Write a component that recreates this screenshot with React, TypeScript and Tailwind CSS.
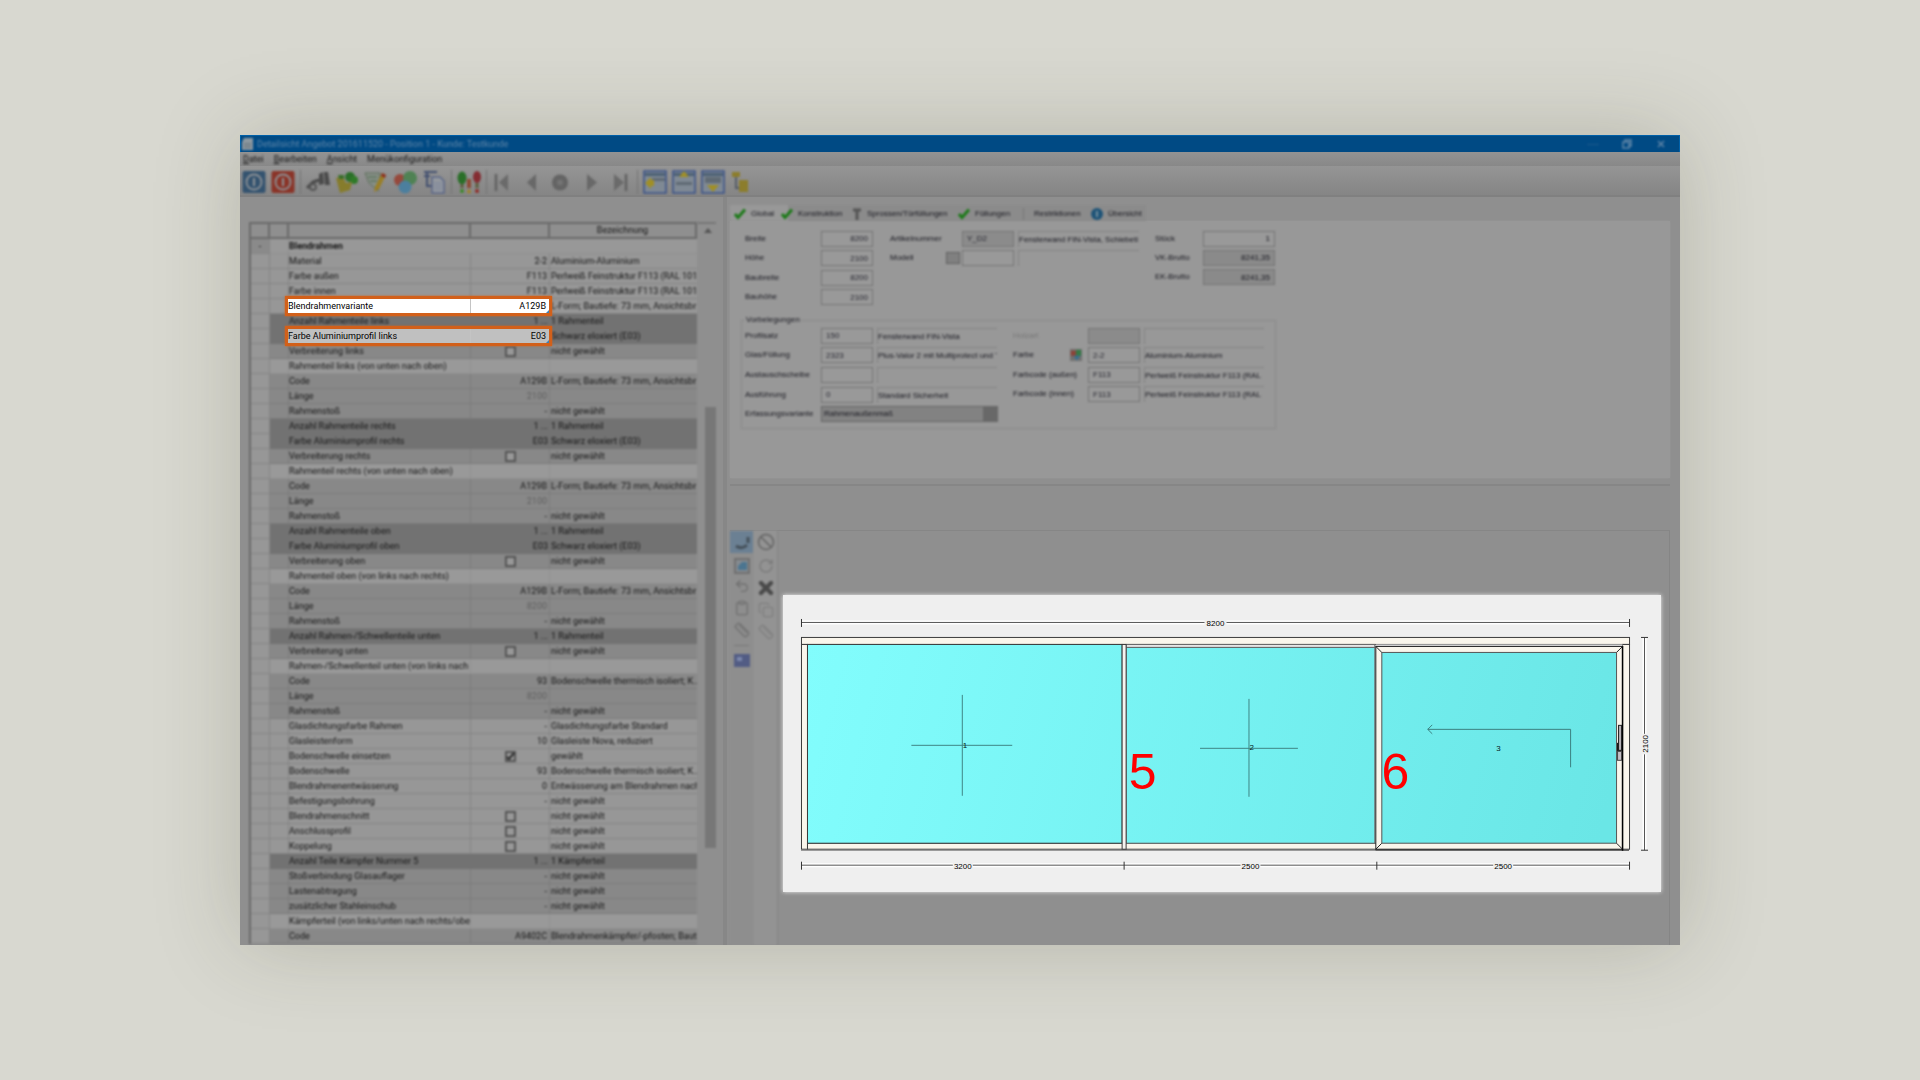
import React from "react";
import { Ban, RotateCw, X, Copy, Clipboard, Undo2, Ruler } from "lucide-react";

type Kind = "title" | "light" | "mid" | "dark" | "group";
type Row = { kind: Kind; name: string; value?: string; desc?: string; box?: boolean; checked?: boolean; faint?: boolean };

const NG = "nicht gewählt";
const LF = "L-Form; Bautiefe: 73 mm, Ansichtsbr";
const BS = "Bodenschwelle thermisch isoliert; K...";

const r = (kind: Kind, name: string, value?: string, desc?: string, extra: Partial<Row> = {}): Row => ({ kind, name, value, desc, ...extra });

// Rows with an empty name get their text from the Highlight laid over them.
const rows: Row[] = [
  r("title", "Blendrahmen"),
  r("light", "Material", "2-2", "Aluminium-Aluminium"),
  r("light", "Farbe außen", "F113", "Perlweiß Feinstruktur F113 (RAL 1013)"),
  r("light", "Farbe innen", "F113", "Perlweiß Feinstruktur F113 (RAL 1013)"),
  r("light", "", "", LF),
  r("dark", "Anzahl Rahmenteile links", "1 ...", "1 Rahmenteil"),
  r("dark", "", "", "Schwarz eloxiert (E03)"),
  r("mid", "Verbreiterung links", "", NG, { box: true }),
  r("group", "Rahmenteil links (von unten nach oben)"),
  r("mid", "Code", "A129B", LF),
  r("mid", "Länge", "2100", "", { faint: true }),
  r("mid", "Rahmenstoß", "-", NG),
  r("dark", "Anzahl Rahmenteile rechts", "1 ...", "1 Rahmenteil"),
  r("dark", "Farbe Aluminiumprofil rechts", "E03", "Schwarz eloxiert (E03)"),
  r("mid", "Verbreiterung rechts", "", NG, { box: true }),
  r("group", "Rahmenteil rechts (von unten nach oben)"),
  r("mid", "Code", "A129B", LF),
  r("mid", "Länge", "2100", "", { faint: true }),
  r("mid", "Rahmenstoß", "-", NG),
  r("dark", "Anzahl Rahmenteile oben", "1 ...", "1 Rahmenteil"),
  r("dark", "Farbe Aluminiumprofil oben", "E03", "Schwarz eloxiert (E03)"),
  r("mid", "Verbreiterung oben", "", NG, { box: true }),
  r("group", "Rahmenteil oben (von links nach rechts)"),
  r("mid", "Code", "A129B", LF),
  r("mid", "Länge", "8200", "", { faint: true }),
  r("mid", "Rahmenstoß", "-", NG),
  r("dark", "Anzahl Rahmen-/Schwellenteile unten", "1 ...", "1 Rahmenteil"),
  r("mid", "Verbreiterung unten", "", NG, { box: true }),
  r("group", "Rahmen-/Schwellenteil unten (von links nach r"),
  r("mid", "Code", "93", BS),
  r("mid", "Länge", "8200", "", { faint: true }),
  r("mid", "Rahmenstoß", "-", NG),
  r("light", "Glasdichtungsfarbe Rahmen", "-", "Glasdichtungsfarbe Standard"),
  r("light", "Glasleistenform", "10", "Glasleiste Nova, reduziert"),
  r("light", "Bodenschwelle einsetzen", "", "gewählt", { box: true, checked: true }),
  r("light", "Bodenschwelle", "93", BS),
  r("light", "Blendrahmenentwässerung", "0", "Entwässerung am Blendrahmen nach"),
  r("light", "Befestigungsbohrung", "-", NG),
  r("light", "Blendrahmenschnitt", "", NG, { box: true }),
  r("light", "Anschlussprofil", "", NG, { box: true }),
  r("light", "Koppelung", "", NG, { box: true }),
  r("dark", "Anzahl Teile Kämpfer Nummer 5", "1 ...", "1 Kämpferteil"),
  r("mid", "Stoßverbindung Glasauflager", "-", NG),
  r("mid", "Lastenabtragung", "-", NG),
  r("mid", "zusätzlicher Stahleinschub", "-", NG),
  r("group", "Kämpferteil (von links/unten nach rechts/oben)"),
  r("mid", "Code", "A9402C", "Blendrahmenkämpfer/-pfosten; Bauti"),
];

const bgOf: Record<Kind, string> = {
  title: "bg-[#989898] border-[#909090]",
  group: "bg-[#999999] border-[#909090]",
  light: "bg-[#979797] border-[#848484]",
  mid: "bg-[#888888] border-[#7b7b7b]",
  dark: "bg-[#727272] border-[#717171]",
};

function PropertyTable() {
  const head = "h-[15px] border-r-2 border-b-2 border-[#6a6a6a] p-0 font-normal";
  return (
    <table className="w-full table-fixed border-separate border-spacing-0 border-t-2 border-l-2 border-[#6a6a6a] text-[9px] leading-[13px] text-[#141414]">
      <colgroup>
        <col className="w-[19px]" />
        <col className="w-[19px]" />
        <col />
        <col className="w-[79px]" />
        <col className="w-[147px]" />
      </colgroup>
      <thead>
        <tr>
          <th className={head} aria-label="Gruppe" />
          <th className={head} aria-label="Status" />
          <th className={head} aria-label="Merkmal" />
          <th className={head} aria-label="Wert" />
          <th className={head}>Bezeichnung</th>
        </tr>
      </thead>
      <tbody>
        {rows.map((row, i) => {
          const cell = `h-[15px] border-b p-0 overflow-hidden whitespace-nowrap ${bgOf[row.kind]}`;
          return (
            <tr key={i}>
              <td className={`h-[15px] border-r border-b border-[#858585] p-0 text-center ${i === 0 ? "bg-[#8a8a8a]" : "bg-[#979797]"}`}>{i === 0 ? "-" : ""}</td>
              <td className={`${cell} ${row.kind === "dark" ? "" : "border-r"}`} />
              <td className={`${cell} ${row.kind === "title" ? "font-bold" : row.kind === "dark" ? "" : "border-r"}`}>{row.name}</td>
              <td className={`${cell} pr-0.5 text-right ${row.kind === "title" || row.kind === "dark" ? "" : "border-r"} ${row.faint ? "text-[#606060]" : ""}`}>
                {row.box ? (
                  <div className="relative flex justify-center pl-0.5">
                    <input
                      type="checkbox"
                      aria-label={row.name}
                      defaultChecked={row.checked}
                      className="h-[11px] w-[11px] appearance-none border-2 border-[#555] bg-[#989898]"
                    />
                    {row.checked && (
                      <svg viewBox="0 0 11 11" className="pointer-events-none absolute h-[11px] w-[11px]"><path d="M2 6l2 2 5-6" fill="none" stroke="#2c2c2c" strokeWidth="2" /></svg>
                    )}
                  </div>
                ) : (
                  row.value
                )}
              </td>
              <td className={`${cell} pl-px`}>{row.desc}</td>
            </tr>
          );
        })}
      </tbody>
    </table>
  );
}

function Highlight({ name, value, tone, place }: { name: string; value: string; tone: string; place: string }) {
  return (
    <div className={`absolute right-[171px] left-9 flex h-5 border-3 border-[#d2601a] text-[9px] leading-[14px] text-black shadow-[0_0_2px_#d2601a] ${tone} ${place}`}>
      <span className="flex-1 border-r border-[#c4c4c4]">{name}</span>
      <span className="relative w-[78px] pr-[3px] text-right">
        {value}
        <svg className="absolute right-0 bottom-0 h-[3px] w-[3px]" viewBox="0 0 3 3"><path d="M3 0v3H0z" fill="#3d7fb5" /></svg>
      </span>
    </div>
  );
}

function ToolButton({ label, children }: { label: string; children: React.ReactNode }) {
  return (
    <button type="button" aria-label={label} className="flex h-6 w-6 shrink-0 items-center justify-center">
      {children}
    </button>
  );
}

const Sep = () => <div className="h-6 w-px shrink-0 bg-[#747474]" />;

function Icon({ children }: { children: React.ReactNode }) {
  return <svg viewBox="0 0 24 24" className="h-6 w-6">{children}</svg>;
}

function Power({ fill }: { fill: string }) {
  return (
    <Icon>
      <rect x="0.5" y="1" width="23" height="22" rx="2" fill={fill} />
      <circle cx="12" cy="12" r="7.5" fill="none" stroke="#8e9296" strokeWidth="1.8" />
      <path d="M12 8v8" stroke="#8e9296" strokeWidth="2" />
    </Icon>
  );
}

function PanelIcon({ arrow, side }: { arrow: string; side: string }) {
  return (
    <Icon>
      <rect x="1" y="1" width="22" height="22" fill="#7f8994" stroke="#3a5288" strokeWidth="1.5" />
      <path d="M2 3h20v3H2z" fill="#4c6074" />
      <path d={side} fill="#5f6a74" />
      <path d={arrow} fill="#a08f26" />
    </Icon>
  );
}

function Toolbar() {
  return (
    <div className="h-[31px] overflow-hidden border-b-2 border-[#808080] bg-linear-to-b from-[#959595] to-[#858585]">
      <div className="flex h-full items-center gap-[5px] pt-0.5 pl-0.5 blur-[1px]" role="toolbar" aria-label="Werkzeuge">
        <ToolButton label="Speichern"><Power fill="#34536f" /></ToolButton>
        <ToolButton label="Beenden"><Power fill="#8a3428" /></ToolButton>
        <Sep />
        <ToolButton label="Suchen">
          <Icon>
            <path d="M13 4l4-2 1 12-5 1zM18 2h4l2 13h-5z" fill="#4a4a4a" />
            <path d="M1 18l6-6 6-2M15 6v8" fill="none" stroke="#4a4a4a" strokeWidth="3" />
            <circle cx="7" cy="17" r="3" fill="none" stroke="#555" strokeWidth="2" />
          </Icon>
        </ToolButton>
        <ToolButton label="Farben">
          <Icon>
            <circle cx="15" cy="7" r="5" fill="#2a6f28" /><circle cx="19" cy="10" r="4" fill="#2f7a28" />
            <path d="M1 8l7-1 3 6 6-1-2 8-10 3z" fill="#867c2c" /><path d="M3 5h6v4H4z" fill="#3b6f2a" />
          </Icon>
        </ToolButton>
        <ToolButton label="Bearbeiten">
          <Icon>
            <path d="M1 3h15l-2 18-9-8z" fill="#868e86" stroke="#5c6e5a" /><path d="M4 7h9M6 11h7" stroke="#4b6a4b" />
            <path d="M18 3l4 2-7 14-5 3 1-5z" fill="#9a7f26" /><path d="M18 3l4 2-1 3-4-2z" fill="#8c2c20" />
          </Icon>
        </ToolButton>
        <ToolButton label="Farbpalette">
          <Icon>
            <circle cx="7" cy="10" r="6" fill="#96493c" /><circle cx="17" cy="8" r="7" fill="#4f8254" /><circle cx="12" cy="17" r="6.5" fill="#4c7f9e" />
          </Icon>
        </ToolButton>
        <ToolButton label="Kopieren">
          <Icon>
            <path d="M2 2h13M2 6h6M5 2v14h5" fill="none" stroke="#435070" strokeWidth="2" />
            <path d="M10 7h8l4 4v12H10z" fill="#94989e" stroke="#5a6688" strokeWidth="1.5" /><path d="M12 13h8M12 16h8M12 19h8" stroke="#77819a" />
          </Icon>
        </ToolButton>
        <Sep />
        <ToolButton label="Prüfen">
          <Icon>
            <ellipse cx="5" cy="8" rx="4.5" ry="6.5" fill="#2a6f28" /><ellipse cx="20" cy="7" rx="4" ry="6" fill="#842c32" />
            <path d="M12 9v9" stroke="#8e4a34" strokeWidth="4" /><path d="M5 14v4M20 13v5" stroke="#5c5c3c" strokeWidth="3" />
            <circle cx="5" cy="21" r="2" fill="#3a8a28" /><circle cx="12" cy="21.5" r="2" fill="#a0842c" /><circle cx="20" cy="21" r="2" fill="#902c28" />
          </Icon>
        </ToolButton>
        <Sep />
        <ToolButton label="Erste Position"><Icon><path d="M4 4v17" stroke="#606060" strokeWidth="2.5" /><path d="M16 4v17L7 12.5z" fill="#6a6a6a" /></Icon></ToolButton>
        <ToolButton label="Vorherige Position"><Icon><path d="M15 4v17L6 12.5z" fill="#686868" /></Icon></ToolButton>
        <ToolButton label="Aktuelle Position"><Icon><circle cx="10" cy="12.5" r="8" fill="#646464" /><circle cx="10" cy="12.5" r="3" fill="#747474" /></Icon></ToolButton>
        <ToolButton label="Nächste Position"><Icon><path d="M8 4v17l10-8.5z" fill="#686868" /></Icon></ToolButton>
        <ToolButton label="Letzte Position"><Icon><path d="M18 4v17" stroke="#606060" strokeWidth="2.5" /><path d="M6 4v17l10-8.5z" fill="#6a6a6a" /></Icon></ToolButton>
        <Sep />
        <ToolButton label="Bereich links"><PanelIcon side="M9 8h13v3H9z" arrow="M2 13l6-6v3h3v6H8v3z" /></ToolButton>
        <ToolButton label="Bereich oben"><PanelIcon side="M4 12h16v3H4z" arrow="M12 1l5 6H7z" /></ToolButton>
        <ToolButton label="Bereich unten"><PanelIcon side="M4 7h16v6H4z" arrow="M12 22l6-7H6z" /></ToolButton>
        <ToolButton label="Struktur">
          <Icon><path d="M6 6v12h6" stroke="#555c66" strokeWidth="2" fill="none" /><path d="M2 2h8v5H2zM9 10h9v12H9z" fill="#8c7d2c" /></Icon>
        </ToolButton>
      </div>
    </div>
  );
}

const Check = () => (
  <svg viewBox="0 0 12 12" className="h-3 w-3 shrink-0"><path d="M1 6l3 3.500L11 1.500" fill="none" stroke="#1e7a1a" strokeWidth="3" /></svg>
);

const boxCls = "h-4 w-[52px] border border-[#757575] px-1 text-[#262630]";

function Field({ id, label, value, right, gray, desc, pre, faint, cols }: {
  id: string; label: string; value?: string; right?: boolean; gray?: boolean; desc?: string; pre?: React.ReactNode; faint?: boolean; cols: string;
}) {
  return (
    <div className={`grid items-center ${cols}`}>
      <label htmlFor={id} className={`whitespace-nowrap ${faint ? "text-[#777]" : ""}`}>{label}</label>
      <div className="flex items-center justify-end gap-0.5">
        {pre}
        <input id={id} defaultValue={value} className={`${boxCls} ${right ? "text-right" : ""} ${gray ? "bg-[#8b8b8b]" : "bg-[#999]"}`} />
      </div>
      {desc !== undefined && (
        <div className="h-4 overflow-hidden border-t border-l border-[#838383] pt-px leading-[14px] whitespace-nowrap">{desc}</div>
      )}
    </div>
  );
}

function GlobalForm() {
  const a = "grid-cols-[76px_52px_124px] [&>div:last-child:nth-child(3)]:ml-1";
  const b = "grid-cols-[72px_52px_125px] [&>div:last-child:nth-child(3)]:ml-1";
  const c = "grid-cols-[75px_52px_124px] [&>div:last-child:nth-child(3)]:ml-1";
  return (
    <form className="flex flex-col pt-2 pl-[15px] text-[8px] leading-3 text-[#16161e] blur-[1px]">
      <div className="flex">
        <div className="grid h-[78px] w-[145px] auto-rows-fr">
          <Field id="breite" label="Breite" value="8200" right cols={a} />
          <Field id="hoehe" label="Höhe" value="2100" right cols={a} />
          <Field id="baubreite" label="Baubreite" value="8200" right cols={a} />
          <Field id="bauhoehe" label="Bauhöhe" value="2100" right cols={a} />
        </div>
        <div className="grid h-[39px] w-[265px] auto-rows-fr">
          <Field id="artikel" label="Artikelnummer" value="Y_D2" gray desc="Fensterwand FIN-Vista, Schiebeti" cols={b} />
          <Field id="modell" label="Modell" desc="" cols={b} pre={<button type="button" aria-label="Modell wählen" className="h-3 w-3.5 shrink-0 border border-[#606060] bg-[#808080]" />} />
        </div>
        <div className="grid h-[58px] auto-rows-fr">
          {[["stueck", "Stück", "1"], ["vk", "VK-Brutto", "8241,35"], ["ek", "EK-Brutto", "8241,35"]].map(([id, l, v], i) => (
            <div key={id} className="grid grid-cols-[48px_72px] items-center">
              <label htmlFor={id}>{l}</label>
              <input id={id} defaultValue={v} className={`h-4 border border-[#757575] px-1 text-right ${i ? "bg-[#8a8a8a]" : "bg-[#999]"}`} />
            </div>
          ))}
        </div>
      </div>
      <fieldset className="mt-[7px] -ml-1 h-[115px] w-[535px] border border-[#8a8a8a] pl-[3px]">
        <legend className="px-px leading-3">Vorbelegungen</legend>
        <div className="flex">
          <div className="grid h-[98px] w-[268px] auto-rows-fr">
            <Field id="profil" label="Profilsatz" value="150" desc="Fensterwand FIN-Vista" cols={a} />
            <Field id="glas" label="Glas/Füllung" value="2323" desc="Plus-Valor 2 mit Multiprotect und T" cols={a} />
            <Field id="tausch" label="Austauschscheibe" desc="" cols={a} />
            <Field id="ausf" label="Ausführung" value="0" desc="Standard Sicherheit" cols={a} />
            <div className="grid grid-cols-[76px_177px] items-center">
              <label htmlFor="erf">Erfassungsvariante</label>
              <select id="erf" className="h-4 appearance-none border border-[#666] bg-linear-to-r from-[#828282] from-92% to-[#686868] to-92% px-0.5">
                <option>Rahmenaußenmaß</option>
              </select>
            </div>
          </div>
          <div className="grid h-[78px] auto-rows-fr">
            <Field id="holz" label="Holzart" gray faint desc="" cols={c} />
            <Field id="farbe" label="Farbe" value="2-2" desc="Aluminium-Aluminium" cols={c} pre={
              <button type="button" aria-label="Farbe wählen" className="mr-1 h-3 w-3 shrink-0">
                <svg viewBox="0 0 14 14"><path d="M0 0h14v14H0z" fill="#707070" /><path d="M1 2h6v6H1z" fill="#8c4238" /><path d="M7 1h6v7H7z" fill="#347a46" /><path d="M4 8h8l-4 5z" fill="#346e94" /></svg>
              </button>
            } />
            <Field id="fa" label="Farbcode (außen)" value="F113" desc="Perlweiß Feinstruktur F113 (RAL" cols={c} />
            <Field id="fi" label="Farbcode (innen)" value="F113" desc="Perlweiß Feinstruktur F113 (RAL" cols={c} />
          </div>
        </div>
      </fieldset>
    </form>
  );
}

function Tabs() {
  const t = "flex h-[14px] items-center gap-[5px] whitespace-nowrap";
  return (
    <div role="tablist" className="flex h-6 items-end text-[8px] leading-3 text-[#16161e]">
      <div className="flex h-4 items-center bg-linear-to-r from-[#989898] from-14% to-[#8b8b8b] to-14% pt-px pr-1 pl-1 blur-[1px]">
        <button type="button" role="tab" aria-selected="true" className={`${t} w-[47px]`}><Check />Global</button>
        <button type="button" role="tab" className={`${t} w-[71px]`}><Check />Konstruktion</button>
        <button type="button" role="tab" className={`${t} w-[106px]`}>
          <svg viewBox="0 0 10 12" className="h-3 w-2.5"><path d="M1 2h8M5 2v10" fill="none" stroke="#555" strokeWidth="3" /></svg>Sprossen/Türfüllungen
        </button>
        <button type="button" role="tab" className={`${t} w-[65px]`}><Check />Füllungen</button>
        <div className="h-3 w-px bg-[#777]" />
        <button type="button" role="tab" className={`${t} w-[67px] pl-[10px]`}>Restriktionen</button>
        <button type="button" role="tab" className={t}>
          <svg viewBox="0 0 12 12" className="h-3 w-3"><circle cx="6" cy="6" r="6" fill="#1f5478" /><path d="M6 3v6" stroke="#6f8c9c" strokeWidth="2" /></svg>Übersicht
        </button>
      </div>
    </div>
  );
}

const ink = "#3c3c3c";

function Drawing() {
  const dim = (d: string) => (
    <>
      <path d={d} stroke="#fff" strokeWidth="4" fill="none" />
      <path d={d} stroke="#555" strokeWidth="1" fill="none" />
    </>
  );
  return (
    <svg viewBox="783 595 879 297" className="block w-full" fontFamily="Liberation Sans, Arial, sans-serif" role="img" aria-label="Fensterwand Ansicht">
      <defs>
        <linearGradient id="glass" gradientUnits="userSpaceOnUse" x1="807" y1="645" x2="1600" y2="845">
          <stop offset="0" stopColor="#82fdfd" />
          <stop offset="1" stopColor="#6ae6e6" />
        </linearGradient>
      </defs>
      {dim("M801.500 622.500H1205M1227 622.500H1630.500")}
      {dim("M801.500 865.500H953M973 865.500H1241M1261 865.500H1494M1514 865.500H1630.500")}
      {dim("M1645.500 637.500V734M1645.500 754.500V850.500")}
      <path d="M801.500 619v8M1630.500 619v8M801.500 862v8M1124.500 862v8M1377.500 862v8M1630.500 862v8M1642 637.500h7M1642 850.500h7" stroke="#333" />
      <g fontSize="8" textAnchor="middle" fill="#000">
        <text x="1216" y="626">8200</text>
        <text x="963" y="869">3200</text>
        <text x="1251" y="869">2500</text>
        <text x="1504" y="869">2500</text>
        <text x="1649" y="744" transform="rotate(-90 1649 744)">2100</text>
      </g>
      <g fill="#faf6ec" stroke={ink}>
        <rect x="801.500" y="637.500" width="829" height="7" />
        <rect x="801.500" y="644.500" width="6" height="205" />
        <rect x="807.500" y="843.500" width="815" height="6" />
        <rect x="1623.500" y="644.500" width="7" height="205" />
      </g>
      <path d="M801 850.500H1376" stroke="#777" />
      <rect x="807.500" y="644.500" width="315" height="199" fill="url(#glass)" stroke={ink} />
      <rect x="1126.500" y="644.500" width="249" height="3" fill="#e6e6e6" stroke="#666" />
      <rect x="1126.500" y="647.500" width="249" height="196" fill="url(#glass)" stroke="#666" />
      <rect x="1122.500" y="644.500" width="4" height="205" fill="#f6f4f0" stroke={ink} />
      <rect x="1376.500" y="644.500" width="247" height="3" fill="#ddd" />
      <rect x="1376.500" y="646.500" width="247" height="203" fill="#faf6ec" stroke="#222" />
      <path d="M1376 850.500H1630" stroke="#333" />
      <path d="M1623.500 646V851" stroke="#000" strokeWidth="1.500" />
      <path d="M1376.500 646.500l6 6M1623.500 646.500l-6 6M1376.500 849.500l6-6M1623.500 849.500l-6-6" stroke="#222" />
      <rect x="1382.500" y="652.500" width="235" height="191" fill="url(#glass)" stroke="#555" />
      <path d="M962.500 695v101M911.500 745.500h101M1249.500 699v98M1200.500 748.500h98" stroke="#3f8585" />
      <path d="M1571.500 767.500V729.500H1428.500M1433 725l-4.500 4.500 4.500 4.500" fill="none" stroke="#3b8080" />
      <g fontSize="8" fill="#062020">
        <text x="963" y="748">1</text>
        <text x="1250" y="750">2</text>
        <text x="1497" y="751">3</text>
      </g>
      <g fontSize="50" fill="#f00" textAnchor="middle">
        <text x="1143" y="789">5</text>
        <text x="1396" y="789">6</text>
      </g>
      <rect x="1618" y="743" width="5" height="9" fill="#111" />
      <rect x="1619.500" y="725.500" width="3" height="25" fill="#b8b4b8" stroke="#222" />
      <rect x="1618.500" y="751.500" width="4" height="9" fill="#c4bfc4" stroke="#444" />
    </svg>
  );
}

function SideTools() {
  const g = "flex h-[22px] w-full items-center justify-center";
  const ic = "h-4 w-4 text-[#707070]";
  return (
    <div className="flex w-[48px] gap-px overflow-hidden blur-[1px]">
      <div className="flex w-6 flex-col bg-[#8e8e8e]">
        <button type="button" aria-label="Drehen" className={`${g} bg-[#6b8093]`}>
          <svg viewBox="0 0 16 16" className="h-4 w-4"><path d="M2 12q6 4 11-1M14 3v6" fill="none" stroke="#45505a" strokeWidth="3" /></svg>
        </button>
        <button type="button" aria-label="Ansicht" className={`${g} pt-1`}>
          <svg viewBox="0 0 16 16" className="h-4 w-4"><rect x="1" y="1" width="14" height="14" fill="#868b90" stroke="#707070" strokeWidth="2" /><path d="M4 8l4-4h5v8H4z" fill="#4c7590" /></svg>
        </button>
        <button type="button" aria-label="Rückgängig" className={g}><Undo2 className={ic} /></button>
        <button type="button" aria-label="Einfügen" className={g}><Clipboard className={ic} /></button>
        <button type="button" aria-label="Messen" className={g}><Ruler className={ic} /></button>
        <div className="mx-1 mt-1 border-t border-[#777]" />
        <button type="button" aria-label="Bild" className={`${g} mt-1`}>
          <svg viewBox="0 0 16 14" className="h-3.5 w-4"><rect width="16" height="13" fill="#525c84" /><path d="M3 3h5v4H3z" fill="#7c88ac" /></svg>
        </button>
      </div>
      <div className="flex w-6 flex-col border-r border-[#858585] bg-[#939393]">
        <button type="button" aria-label="Sperren" className={g}><Ban className="h-[18px] w-[18px] text-[#646464]" /></button>
        <button type="button" aria-label="Kopie" className={`${g} pt-1`}><RotateCw className="h-4 w-4 text-[#7a7a7a]" /></button>
        <button type="button" aria-label="Löschen" className={`${g} pt-1`}><X className="h-5 w-5 text-[#4a4a4a]" strokeWidth={5} /></button>
        <button type="button" aria-label="Duplizieren" className={`${g} pt-1`}><Copy className="h-4 w-4 text-[#7f7f7f]" /></button>
        <button type="button" aria-label="Maß" className={`${g} pt-1`}><Ruler className="h-4 w-4 text-[#7f7f7f]" /></button>
      </div>
    </div>
  );
}

export default function App() {
  return (
    <main className="flex min-h-screen items-center justify-center bg-[#d8d8d0] font-['Roboto','Noto_Sans',sans-serif]">
      <section className="flex h-[75vh] w-3/4 flex-col overflow-hidden bg-[#8f8f8f] shadow-[0_0_80px_rgba(60,60,30,0.22)]">
        <header className="h-[17px] shrink-0 border border-b-0 border-[#0060a8] bg-[#004a84] text-[9px] leading-4 text-[#5f86a8]">
          <div className="flex items-center gap-1 blur-[1px]">
            <svg viewBox="0 0 12 14" className="h-3.5 w-3"><path d="M3 1h9v12H1V5z" fill="#8c98a0" /><path d="M3 7h7M3 10h7" stroke="#5c6870" /></svg>
            <h1 className="flex-1 whitespace-nowrap">Detailsicht Angebot 201611520 - Position 1 - Kunde: Testkunde</h1>
            <div className="flex h-4 items-center gap-[22px] pr-3">
              <button type="button" aria-label="Minimieren" className="h-px w-3 bg-[#1d5b8c]" />
              <button type="button" aria-label="Wiederherstellen"><svg viewBox="0 0 12 12" className="h-3 w-3"><path d="M2 4h6v6H2zM4 4V2h6v6H8" fill="none" stroke="#5f86a8" strokeWidth="1.500" /></svg></button>
              <button type="button" aria-label="Schließen"><svg viewBox="0 0 12 12" className="h-3 w-3"><path d="M3 3l6 6M9 3l-6 6" stroke="#5f86a8" strokeWidth="1.500" /></svg></button>
            </div>
          </div>
        </header>
        <nav className="h-[14px] shrink-0 bg-linear-to-b from-[#939393] to-[#888] text-[9px] leading-[15px] text-[#141414]">
          <div className="flex gap-[10px] pl-[3px] blur-[1px]">
            <button type="button"><u>D</u>atei</button>
            <button type="button"><u>B</u>earbeiten</button>
            <button type="button"><u>A</u>nsicht</button>
            <button type="button">Menükonfiguration</button>
          </div>
        </nav>
        <Toolbar />
        <div className="flex min-h-0 flex-1">
          <aside className="relative flex w-[487px] shrink-0 overflow-hidden border-r-4 border-[#878787] pt-[25px] pl-[9px]">
            <div className="relative flex h-fit w-full">
              <div className="w-[448px] blur-[1px]"><PropertyTable /></div>
              <div className="flex w-[19px] flex-col items-end border-t-2 border-[#777] blur-[1px]">
                <svg viewBox="0 0 8 5" className="mt-1 mr-1 h-[5px] w-2"><path d="M0 5l4-5 4 5z" fill="#555" /></svg>
                <div className="mt-[174px] h-[441px] w-[11px] bg-[#777]" />
              </div>
              <Highlight name="Blendrahmenvariante" value="A129B" tone="bg-white" place="top-[74px]" />
              <Highlight name="Farbe Aluminiumprofil links" value="E03" tone="bg-[#c0c0c0]" place="top-[104px]" />
            </div>
          </aside>
          <div className="flex min-w-0 flex-1 flex-col pr-[10px] pl-[3px] font-['Liberation_Sans',sans-serif]">
            <Tabs />
            <div className="h-[257px] shrink-0 bg-[#989898] shadow-[0_0_2px_#989898]"><GlobalForm /></div>
            <div className="mt-[6px] h-[47px] shrink-0 border-t-2 border-b border-t-[#868686] border-b-[#868686]" />
            <div className="flex min-h-0 flex-1 border-r border-[#858585]">
              <SideTools />
              <div className="min-w-0 flex-1 pt-16 pr-2 pl-[5px]">
                <div className="bg-[#efefef] shadow-[0_0_4px_#efefef]"><Drawing /></div>
              </div>
            </div>
          </div>
        </div>
      </section>
    </main>
  );
}
